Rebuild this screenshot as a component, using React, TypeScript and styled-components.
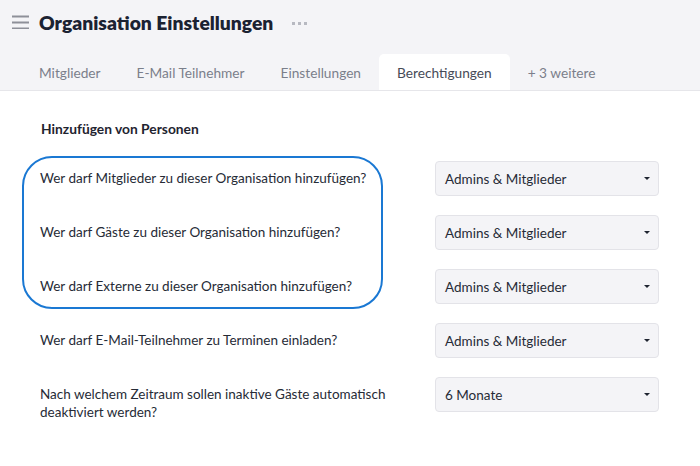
import React from "react";
import styled, { createGlobalStyle } from "styled-components";

const GlobalStyle = createGlobalStyle`
  body {
    margin: 0;
    background: #ffffff;
    font-family: "Lato", "Open Sans", sans-serif;
    color: #262b36;
  }
`;

interface Question {
  text: string;
  value: string;
}

const tabs = ["Mitglieder", "E-Mail Teilnehmer", "Einstellungen", "Berechtigungen", "+ 3 weitere"];

const questions: Question[] = [
  { text: "Wer darf Mitglieder zu dieser Organisation hinzufügen?", value: "Admins & Mitglieder" },
  { text: "Wer darf Gäste zu dieser Organisation hinzufügen?", value: "Admins & Mitglieder" },
  { text: "Wer darf Externe zu dieser Organisation hinzufügen?", value: "Admins & Mitglieder" },
  { text: "Wer darf E-Mail-Teilnehmer zu Terminen einladen?", value: "Admins & Mitglieder" },
  { text: "Nach welchem Zeitraum sollen inaktive Gäste automatisch deaktiviert werden?", value: "6 Monate" },
];

const App: React.FC = () => {
  const activeTab = "Berechtigungen";

  return (
    <>
      <GlobalStyle />
      <Header>
        <TitleRow>
          <svg width="17" height="14" viewBox="0 0 17 14">
            <rect x="0" y="0.5" width="17" height="2" fill="#8e9099" />
            <rect x="0" y="6.5" width="17" height="2" fill="#8e9099" />
            <rect x="0" y="12.5" width="17" height="2" fill="#8e9099" />
          </svg>
          <Title>Organisation Einstellungen</Title>
          <Dots>
            <span />
            <span />
            <span />
          </Dots>
        </TitleRow>
        <TabBar>
          {tabs.map((t) => (
            <Tab key={t} $active={t === activeTab}>
              {t}
            </Tab>
          ))}
        </TabBar>
      </Header>

      <Content>
        <SectionTitle>Hinzufügen von Personen</SectionTitle>
        <Rows>
          <Highlight />
          {questions.map((q) => (
            <Row key={q.text}>
              <QuestionText>{q.text}</QuestionText>
              <Select>
                <span>{q.value}</span>
                <Caret />
              </Select>
            </Row>
          ))}
        </Rows>
      </Content>
    </>
  );
};

export default App;

const Header = styled.div`
  background: #f4f4f7;
  border-bottom: 1px solid #e6e6ea;
`;

const TitleRow = styled.div`
  display: flex;
  align-items: center;
  height: 46px;
  padding-left: 12px;
  box-sizing: border-box;
  padding-bottom: 2px;
`;

const Title = styled.h1`
  margin: 0 0 0 10px;
  font-size: 19.3px;
  font-weight: 800;
  color: #1b2232;
`;

const Dots = styled.div`
  display: flex;
  gap: 3px;
  margin-left: 19px;
  margin-top: 2px;

  span {
    width: 3px;
    height: 3px;
    background: #b7b9c1;
  }
`;

const TabBar = styled.div`
  display: flex;
  padding-left: 21px;
  margin-top: 8px;
`;

const Tab = styled.div<{ $active?: boolean }>`
  height: 36px;
  display: flex;
  align-items: center;
  padding: 0 18px;
  font-size: 13.7px;
  border-radius: 5px 5px 0 0;
  color: ${(p) => (p.$active ? "#464b57" : "#7b7f8b")};
  background: ${(p) => (p.$active ? "#ffffff" : "transparent")};
`;

const Content = styled.div`
  padding: 29px 41px 0 40px;
`;

const SectionTitle = styled.h2`
  margin: 0 0 23px 1px;
  font-size: 13.8px;
  line-height: 18px;
  font-weight: 700;
  color: #1f2430;
`;

const Rows = styled.div`
  position: relative;
  display: flex;
  flex-direction: column;
  gap: 19px;
`;

const Highlight = styled.div`
  position: absolute;
  left: -18px;
  top: -5px;
  width: 357px;
  height: 149px;
  border: 2px solid #1a78d3;
  border-radius: 30px;
  pointer-events: none;
`;

const Row = styled.div`
  display: grid;
  grid-template-columns: 1fr 224px;
  column-gap: 40px;
  align-items: start;
`;

const QuestionText = styled.div`
  font-size: 13.5px;
  line-height: 18px;
  padding-top: 8px;
  color: #262b36;
`;

const Select = styled.div`
  height: 35px;
  box-sizing: border-box;
  display: flex;
  align-items: center;
  justify-content: space-between;
  padding: 0 8px 0 9px;
  background: #f4f4f7;
  border: 1px solid #e3e3e8;
  border-radius: 4px;
  font-size: 13.5px;
  color: #262b36;
`;

const Caret = styled.span`
  width: 0;
  height: 0;
  border-left: 3px solid transparent;
  border-right: 3px solid transparent;
  border-top: 3px solid #1f2430;
`;
